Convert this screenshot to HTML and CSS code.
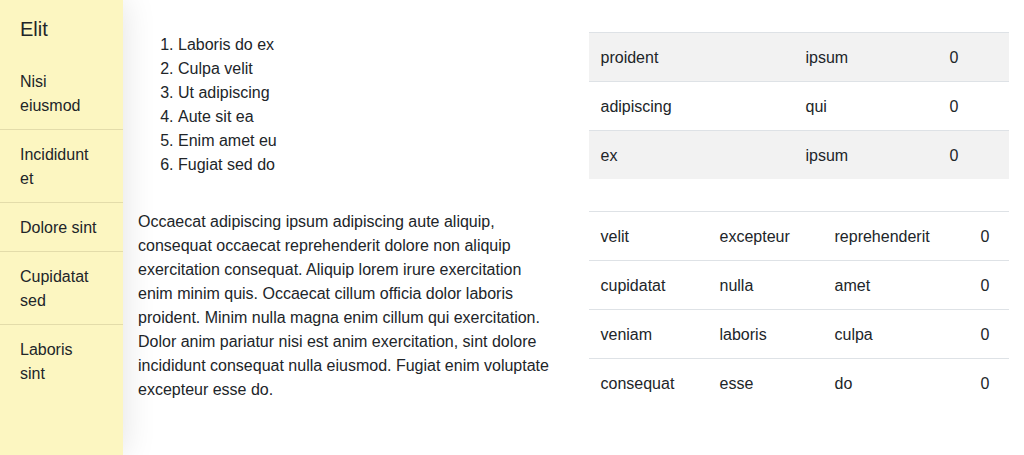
FILE: index.html
```html
<!DOCTYPE html>
<html lang="en">
<head>
<meta charset="utf-8">
<title>Elit</title>
<link rel="stylesheet" href="styles.css">
</head>
<body>
<div class="page">
  <nav class="sidebar">
    <div class="brand">Elit</div>
    <ul class="nav">
      <li class="nav-item">Nisi eiusmod</li>
      <li class="nav-item">Incididunt et</li>
      <li class="nav-item">Dolore sint</li>
      <li class="nav-item">Cupidatat sed</li>
      <li class="nav-item">Laboris sint</li>
    </ul>
  </nav>
  <main class="main">
    <section class="col">
      <ol class="list">
        <li>Laboris do ex</li>
        <li>Culpa velit</li>
        <li>Ut adipiscing</li>
        <li>Aute sit ea</li>
        <li>Enim amet eu</li>
        <li>Fugiat sed do</li>
      </ol>
      <p class="text">Occaecat adipiscing ipsum adipiscing aute aliquip, consequat occaecat reprehenderit dolore non aliquip exercitation consequat. Aliquip lorem irure exercitation enim minim quis. Occaecat cillum officia dolor laboris proident. Minim nulla magna enim cillum qui exercitation. Dolor anim pariatur nisi est anim exercitation, sint dolore incididunt consequat nulla eiusmod. Fugiat enim voluptate excepteur esse do.</p>
    </section>
    <section class="col col-tables">
      <table class="table striped t3">
        <tbody>
          <tr><td>proident</td><td>ipsum</td><td>0</td></tr>
          <tr><td>adipiscing</td><td>qui</td><td>0</td></tr>
          <tr><td>ex</td><td>ipsum</td><td>0</td></tr>
        </tbody>
      </table>
      <table class="table t4">
        <tbody>
          <tr><td>velit</td><td>excepteur</td><td>reprehenderit</td><td>0</td></tr>
          <tr><td>cupidatat</td><td>nulla</td><td>amet</td><td>0</td></tr>
          <tr><td>veniam</td><td>laboris</td><td>culpa</td><td>0</td></tr>
          <tr><td>consequat</td><td>esse</td><td>do</td><td>0</td></tr>
        </tbody>
      </table>
    </section>
  </main>
</div>
</body>
</html>
```
FILE: styles.css
```css
* { box-sizing: border-box; }

html, body {
  margin: 0;
  padding: 0;
  background: #fff;
}

body {
  font-family: "Liberation Sans", Arial, sans-serif;
  font-size: 16px;
  line-height: 24px;
  color: #212529;
}

.page {
  display: flex;
  min-height: 100vh;
}

.sidebar {
  flex: 0 0 123px;
  width: 123px;
  background: #fcf6c1;
  box-shadow: 0 0 32px rgba(0, 0, 0, 0.12);
  position: relative;
  z-index: 1;
}

.brand {
  font-size: 20px;
  line-height: 24px;
  padding: 17px 20px 16px;
}

.nav {
  list-style: none;
  margin: 0;
  padding: 0;
}

.nav-item {
  padding: 13px 24px 11px 20px;
  border-bottom: 1px solid #e3dcaa;
}

.nav-item:last-child {
  border-bottom: none;
}

.main {
  flex: 1;
  display: grid;
  grid-template-columns: 1fr 1fr;
  padding: 0;
}

.col {
  display: flex;
  flex-direction: column;
  gap: 32px;
  padding: 33px 15px 0;
  min-width: 0;
}

.col-tables {
  padding-top: 32px;
}

.list {
  margin: 0;
  padding-left: 40px;
}

.text {
  margin: 1px 0 0;
}

.table {
  width: 100%;
  border-collapse: collapse;
}

.table td {
  padding: 13px 12px 11px;
  border-top: 1px solid #dee2e6;
  vertical-align: top;
  white-space: nowrap;
}

.striped tr:nth-child(odd) td {
  background: #f2f2f2;
}

.t3 td:nth-child(1) { width: 205px; }
.t3 td:nth-child(2) { width: 144px; }

.t4 td:nth-child(1) { width: 119px; }
.t4 td:nth-child(2) { width: 115px; }
.t4 td:nth-child(3) { width: 146px; }
```
